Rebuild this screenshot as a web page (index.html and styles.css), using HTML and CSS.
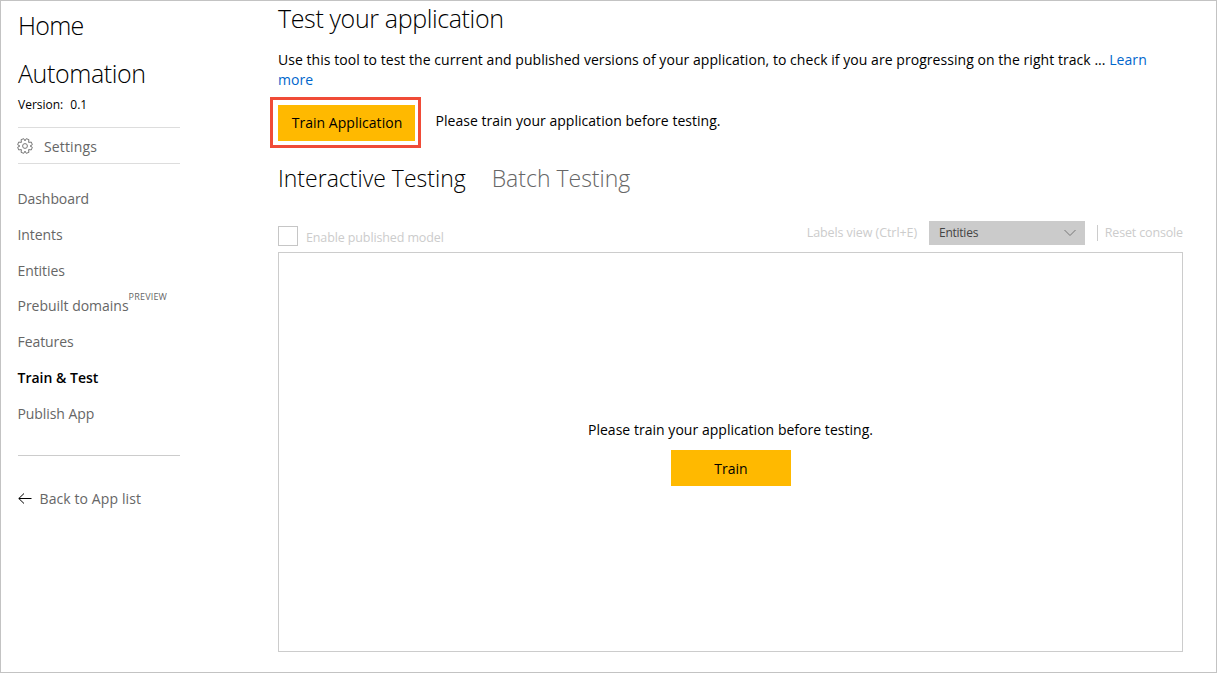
FILE: index.html
```html
<!DOCTYPE html>
<html lang="en">
<head>
<meta charset="utf-8">
<title>Test your application</title>
<link rel="stylesheet" href="styles.css">
</head>
<body>
<div class="page">
  <aside class="sidebar">
    <a class="home">Home</a>
    <h2 class="app-name">Automation</h2>
    <div class="version"><span>Version:</span><span>0.1</span></div>
    <a class="settings">
      <svg class="gear" viewBox="0 0 16 16" width="16" height="16"><path d="M13.100 8L15.300 9.200 14.400 11.900 11.600 11.600 11.900 14.400 9.200 15.300 8 13.100 6.800 15.300 4.100 14.400 4.400 11.600 1.600 11.900.7 9.200 2.900 8 .7 6.800 1.600 4.100 4.400 4.400 4.100 1.600 6.800.7 8 2.900 9.200.7 11.900 1.600 11.600 4.400 14.400 4.100 15.300 6.800z"/><circle cx="8" cy="8" r="2.400"/></svg>
      <span>Settings</span>
    </a>
    <nav class="menu">
      <a>Dashboard</a>
      <a>Intents</a>
      <a>Entities</a>
      <a class="prebuilt"><span>Prebuilt domains</span><span class="preview">PREVIEW</span></a>
      <a>Features</a>
      <a class="active">Train &amp; Test</a>
      <a>Publish App</a>
    </nav>
    <a class="back">
      <svg viewBox="0 0 14 12" width="14" height="12"><path d="M6 1.500L.8 6.500 6 11.500M.8 6.500H13.500"/></svg>
      <span>Back to App list</span>
    </a>
  </aside>
  <main class="content">
    <h1 class="title">Test your application</h1>
    <p class="intro">Use this tool to test the current and published versions of your application, to check if you are progressing on the right track ... <a class="link">Learn<br>more</a></p>
    <div class="train-row">
      <div class="highlight"><button class="btn train-app">Train Application</button></div>
      <span class="notice">Please train your application before testing.</span>
    </div>
    <div class="tabs">
      <span class="tab current">Interactive Testing</span>
      <span class="tab batch">Batch Testing</span>
    </div>
    <div class="toolbar">
      <label class="enable"><span class="checkbox"></span><span class="enable-text">Enable published model</span></label>
      <div class="tools">
        <span class="labels">Labels view (Ctrl+E)</span>
        <div class="select"><span>Entities</span><svg viewBox="0 0 12 8" width="12" height="8"><path d="M.5 1L6 6.500 11.500 1"/></svg></div>
        <span class="reset">Reset console</span>
      </div>
    </div>
    <section class="console">
      <p class="notice">Please train your application before testing.</p>
      <button class="btn train">Train</button>
    </section>
  </main>
</div>
</body>
</html>
```
FILE: styles.css
```css
* { box-sizing: border-box; margin: 0; padding: 0; }
body {
  font-family: "Open Sans", "Noto Sans", sans-serif;
  font-size: 14px;
  color: #000;
  background: #fff;
}
.page {
  display: flex;
  width: 1217px;
  height: 673px;
  border: 1px solid #c3c3c3;
  overflow: hidden;
  white-space: nowrap;
}
svg { display: block; fill: none; flex: none; }
.sidebar {
  width: 162px;
  margin-left: 17px;
  flex: none;
  color: #666;
}
.home, .app-name {
  display: block;
  height: 48px;
  line-height: 48px;
  font-size: 25px;
  font-weight: 300;
  letter-spacing: -.4px;
  color: #000;
}
.home { letter-spacing: -.7px; }
.version {
  display: flex;
  gap: 7px;
  height: 30px;
  line-height: 16px;
  font-size: 12px;
  color: #000;
}
.settings {
  display: flex;
  align-items: center;
  gap: 11px;
  height: 37px;
  border-top: 1px solid #ddd;
  border-bottom: 1px solid #ddd;
  letter-spacing: .15px;
}
.settings span { padding-top: 1px; }
.gear { stroke: #777; stroke-linejoin: round; margin-left: -1px; }
.menu {
  display: flex;
  flex-direction: column;
  height: 292px;
  padding-top: 17px;
  line-height: 36px;
  letter-spacing: -.08px;
  border-bottom: 1px solid #ccc;
}
.menu a { height: 36px; flex: none; margin-left: -.5px; }
.menu .prebuilt { display: flex; height: 35px; line-height: 34px; letter-spacing: -.02px; }
.preview { font-size: 9px; line-height: 16px; letter-spacing: .2px; }
.menu .active { font-weight: 600; color: #000; letter-spacing: 0; }
.back {
  display: flex;
  align-items: center;
  gap: 8px;
  margin-top: 32px;
  margin-left: -.5px;
  height: 20px;
  letter-spacing: .1px;
}
.back svg { stroke: #000; }
.content { width: 905px; margin-left: 98px; }
.title {
  height: 36px;
  line-height: 34px;
  font-size: 25px;
  font-weight: 300;
  letter-spacing: -.37px;
}
.intro { height: 60px; padding-top: 13px; line-height: 20px; letter-spacing: .049px; }
.link { color: #0066cc; }
.train-row { display: flex; margin-left: -8px; }
.highlight {
  width: 151px;
  height: 51px;
  padding: 5px;
  border: 3px solid #f04b37;
}
.btn {
  display: block;
  height: 36px;
  border: 0;
  background: #ffb900;
  font: inherit;
  color: #000;
}
.train-app { width: 137px; padding: 0 0 2px 1px; letter-spacing: .03px; }
.notice { line-height: 20px; letter-spacing: .03px; }
.train-row .notice { margin: 14px 0 0 14.5px; }
.tabs {
  display: flex;
  gap: 26px;
  height: 73px;
  line-height: 61px;
  font-size: 23px;
}
.tab { font-weight: 300; }
.batch { color: #666; }
.toolbar {
  display: flex;
  justify-content: space-between;
  height: 31px;
  font-size: 12.5px;
  letter-spacing: -.08px;
  color: #ccc;
}
.enable { display: flex; gap: 8px; padding-top: 5px; }
.checkbox { width: 20px; height: 20px; border: 1px solid #c6c6c6; }
.enable-text { line-height: 24px; letter-spacing: -.12px; }
.tools { display: flex; line-height: 23px; }
.select {
  display: flex;
  align-items: center;
  justify-content: space-between;
  width: 156px;
  height: 24px;
  margin: 0 12px;
  padding: 0 9px 0 10px;
  background: #cbcbcb;
  color: #444;
  font-size: 12px;
  letter-spacing: -.25px;
}
.select span { padding-bottom: 1px; }
.select svg { stroke: #777; }
.reset {
  display: flex;
  align-items: center;
  width: 86px;
  height: 23px;
  letter-spacing: -.15px;
}
.reset::before { content: ""; width: 1px; height: 16px; margin-right: 7px; background: #ccc; }
.console {
  display: flex;
  flex-direction: column;
  align-items: center;
  height: 400px;
  padding-top: 167px;
  border: 1px solid #ccc;
}
.train { width: 120px; margin-top: 10px; padding-left: 1px; }
```
